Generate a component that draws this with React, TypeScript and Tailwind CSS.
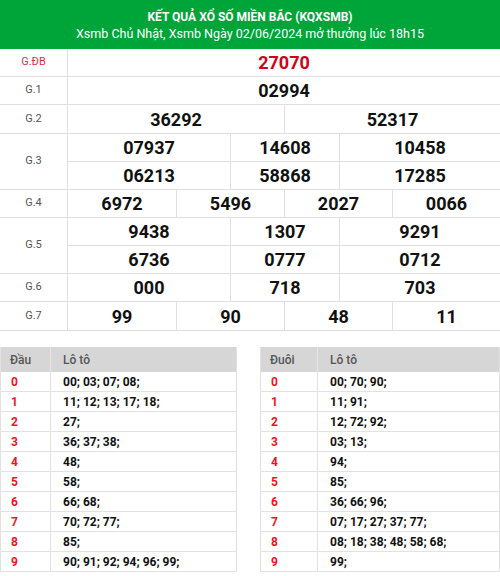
const font = { fontFamily: "Roboto, 'Liberation Sans', sans-serif" };

type Prize = { label: string; rows: string[][]; cols: string; red?: boolean; tall?: boolean };

const prizes: Prize[] = [
  { label: "G.ĐB", rows: [["27070"]], cols: "grid-cols-1", red: true },
  { label: "G.1", rows: [["02994"]], cols: "grid-cols-1" },
  { label: "G.2", rows: [["36292", "52317"]], cols: "grid-cols-2", tall: true },
  { label: "G.3", rows: [["07937", "14608", "10458"], ["06213", "58868", "17285"]], cols: "grid-cols-[162px_109px_1fr]" },
  { label: "G.4", rows: [["6972", "5496", "2027", "0066"]], cols: "grid-cols-4" },
  { label: "G.5", rows: [["9438", "1307", "9291"], ["6736", "0777", "0712"]], cols: "grid-cols-[162px_109px_1fr]" },
  { label: "G.6", rows: [["000", "718", "703"]], cols: "grid-cols-[162px_109px_1fr]" },
  { label: "G.7", rows: [["99", "90", "48", "11"]], cols: "grid-cols-4", tall: true },
];

const dau = [
  "00; 03; 07; 08;",
  "11; 12; 13; 17; 18;",
  "27;",
  "36; 37; 38;",
  "48;",
  "58;",
  "66; 68;",
  "70; 72; 77;",
  "85;",
  "90; 91; 92; 94; 96; 99;",
];

const duoi = [
  "00; 70; 90;",
  "11; 91;",
  "12; 72; 92;",
  "03; 13;",
  "94;",
  "85;",
  "36; 66; 96;",
  "07; 17; 27; 37; 77;",
  "08; 18; 38; 48; 58; 68;",
  "99;",
];

function LotoTable({ title, items, first, width }: { title: string; items: string[]; first: string; width: string }) {
  return (
    <div className={`${width} border-x border-[#e2e2e2]`}>
      <div className="flex h-[25px] bg-[#d6d6d6] text-[12px] font-medium text-[#555]">
        <div className={`${first} flex items-center pl-[9px] border-r border-[#e6e6e6]`}>{title}</div>
        <div className="flex items-center pl-[12px]">Lô tô</div>
      </div>
      {items.map((t, i) => (
        <div key={i} className="flex h-[20px] border-b border-[#e2e2e2] text-[12px]">
          <div className={`${first} flex items-center pl-[10px] font-bold text-[#f0131e] border-r border-[#e2e2e2]`}>{i}</div>
          <div className="flex items-center pl-[12px] font-bold text-[#111]">{t}</div>
        </div>
      ))}
    </div>
  );
}

export default function App() {
  return (
    <div className="w-[500px] h-[576px] overflow-hidden bg-white" style={font}>
      <div className="h-[49px] bg-[#00a53a] text-white flex flex-col items-center justify-center pt-[3px]">
        <div className="text-[12px] font-bold leading-[16px]">KẾT QUẢ XỔ SỐ MIỀN BẮC (KQXSMB)</div>
        <div className="text-[12.5px] leading-[18px]">Xsmb Chủ Nhật, Xsmb Ngày 02/06/2024 mở thưởng lúc 18h15</div>
      </div>

      <div>
        {prizes.map((p) => (
          <div key={p.label} className="flex">
            <div className={`w-[68px] shrink-0 border-r border-b border-[#e0e0e0] flex items-center justify-center text-[11px] ${p.red ? "text-[#e3313c]" : "text-[#555]"}`}>
              {p.label}
            </div>
            <div className="flex-1">
              {p.rows.map((r, ri) => (
                <div key={ri} className={`grid ${p.cols} box-content ${p.tall ? "h-[28px]" : "h-[27px]"} border-b border-[#e0e0e0]`}>
                  {r.map((n, ci) => (
                    <div
                      key={ci}
                      className={`flex items-center justify-center text-[18px] font-bold ${ci > 0 ? "border-l border-[#e0e0e0]" : ""} ${p.red ? "text-[#d0021b]" : "text-[#111]"}`}
                    >
                      {n}
                    </div>
                  ))}
                </div>
              ))}
            </div>
          </div>
        ))}
      </div>

      <div className="flex justify-between pt-[16px]">
        <LotoTable title="Đầu" items={dau} first="w-[50px]" width="w-[237px]" />
        <LotoTable title="Đuôi" items={duoi} first="w-[57px]" width="w-[240px]" />
      </div>
    </div>
  );
}
